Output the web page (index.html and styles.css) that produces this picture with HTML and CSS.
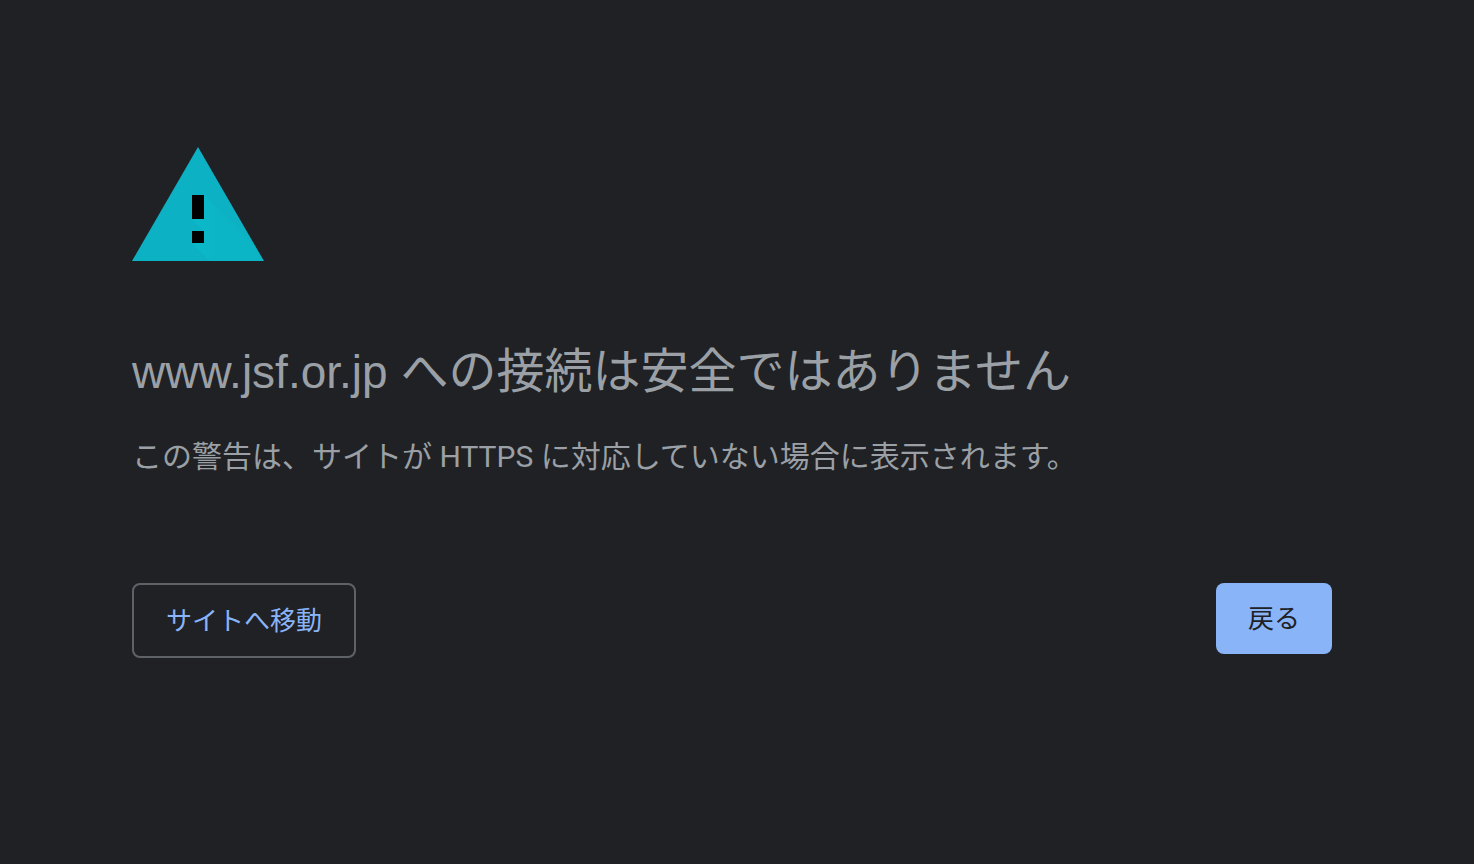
FILE: index.html
```html
<!DOCTYPE html>
<html lang="ja">
<head>
  <meta charset="UTF-8">
  <title>www.jsf.or.jp</title>
  <link rel="stylesheet" href="styles.css">
</head>
<body>
  <main class="interstitial">
    <svg class="icon" viewBox="0 0 132 114" aria-hidden="true">
      <defs>
        <linearGradient id="shade" gradientUnits="userSpaceOnUse" x1="66" y1="0" x2="84" y2="0">
          <stop offset="0" stop-color="#0ab9c9"/>
          <stop offset="1" stop-color="#0cb5c6"/>
        </linearGradient>
      </defs>
      <path fill="#0cb1c3" d="M66 0 132 114H0z"/>
      <path fill="url(#shade)" d="M72 48 119 95 130 114H78L60 96 72 84 60 72z"/>
      <path d="M60 48h12v24H60zM60 84h12v12H60z"/>
    </svg>
    <h1><span class="host">www.jsf.or.jp </span>への接続は安全ではありません</h1>
    <p>この警告は、サイトが HTTPS に対応していない場合に表示されます。</p>
    <div class="nav-wrapper">
      <button type="button" class="secondary-button">サイトへ移動</button>
      <button type="button" class="primary-button">戻る</button>
    </div>
  </main>
</body>
</html>
```
FILE: styles.css
```css
body {
  margin: 0;
  background: #202124;
  color: #9aa0a6;
  font-family: Roboto, "Noto Sans CJK JP", sans-serif;
}
.interstitial {
  max-width: 1200px;
  margin: 0 142px 0 132px;
  padding-top: 147px;
}
.icon {
  display: block;
  width: 132px;
  height: 114px;
}
h1 {
  margin: 76px 0 30px;
  font-family: "Liberation Sans", "Noto Sans CJK JP", sans-serif;
  font-size: 48px;
  font-weight: 400;
  line-height: 70px;
}
.host {
  font-size: 46px;
}
p {
  margin: 0;
  font-size: 30px;
  line-height: 40px;
}
.nav-wrapper {
  display: flex;
  justify-content: space-between;
  align-items: flex-start;
  margin-top: 106px;
}
button {
  box-sizing: border-box;
  padding: 17px 32px 15px;
  border-radius: 8px;
  font-family: inherit;
  font-size: 26px;
  line-height: 39px;
  cursor: pointer;
}
.secondary-button {
  border: 2px solid #5f6368;
  background: transparent;
  color: #8ab4f8;
}
.primary-button {
  border: none;
  background: #8ab4f8;
  color: #202124;
}
```
